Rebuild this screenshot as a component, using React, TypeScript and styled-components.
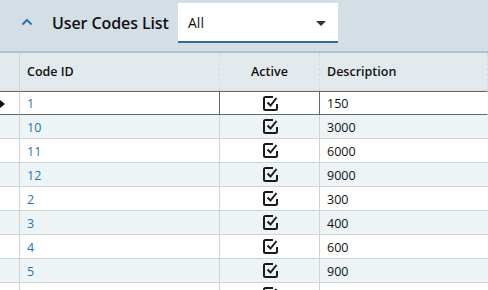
import React from 'react'
import styled, { createGlobalStyle } from 'styled-components'

const GlobalStyle = createGlobalStyle`
  html, body {
    margin: 0;
    padding: 0;
    background: #fff;
    overflow: hidden;
  }
  body {
    font-family: 'Open Sans', 'Noto Sans', sans-serif;
  }
`

const Page = styled.div`
  width: 488px;
  height: 290px;
  overflow: hidden;
  background: #fff;
`

const TitleBar = styled.div`
  display: flex;
  align-items: flex-start;
  height: 53px;
  padding-top: 3px;
  box-sizing: border-box;
  background: #d3dfe4;
  border-bottom: 2px solid #aac3cf;
`

const Collapse = styled.button`
  width: 52px;
  height: 40px;
  padding: 0 0 2px 2px;
  border: 0;
  background: none;
  display: flex;
  align-items: center;
  justify-content: center;
`

const Title = styled.h2`
  margin: 0;
  height: 40px;
  line-height: 40px;
  font-size: 16px;
  font-weight: 600;
  color: #111;
  letter-spacing: -0.1px;
  width: 126px;
`

const Select = styled.div`
  width: 160px;
  height: 40px;
  box-sizing: border-box;
  background: #fff;
  border-bottom: 2px solid #2b6f98;
  display: flex;
  align-items: center;
  justify-content: space-between;
  padding: 0 12px 0 10px;
  font-size: 14px;
  color: #111;
`

const Caret = styled.span`
  width: 0;
  height: 0;
  border-left: 5px solid transparent;
  border-right: 5px solid transparent;
  border-top: 5px solid #333;
  margin-top: 2px;
`

const Grid = styled.div`
  display: grid;
  grid-template-columns: 20px 200px 100px 1fr;
`

const Head = styled.div<{ $center?: boolean; $first?: boolean }>`
  height: 38px;
  box-sizing: border-box;
  background: #e3eaed;
  border-right: ${(p) => (p.$first ? '1px solid #ccd3d6' : '1px dashed #d3d9dc')};
  border-bottom: 1px solid #d9dfe2;
  display: flex;
  align-items: center;
  justify-content: ${(p) => (p.$center ? 'center' : 'flex-start')};
  padding-left: ${(p) => (p.$center || p.$first ? '0' : '7px')};
  font-size: 12.5px;
  font-weight: 600;
  color: #111;
`

const Cell = styled.div<{ $alt?: boolean; $center?: boolean; $link?: boolean; $sel?: boolean; $last?: boolean }>`
  height: 24px;
  box-sizing: border-box;
  background: ${(p) => (p.$alt ? '#edf4f6' : '#fff')};
  border-right: 1px solid ${(p) => (p.$last ? 'transparent' : '#cfd3d5')};
  border-bottom: 1px solid ${(p) => (p.$sel ? '#666' : '#cfd3d5')};
  border-top: ${(p) => (p.$sel ? '1px solid #666' : '0')};
  display: flex;
  align-items: center;
  justify-content: ${(p) => (p.$center ? 'center' : 'flex-start')};
  padding-left: ${(p) => (p.$center ? '0' : '7px')};
  padding-top: ${(p) => (p.$center ? '0' : '1px')};
  font-size: 12.5px;
  color: ${(p) => (p.$link ? '#2677ae' : '#111')};
`

const Marker = styled(Cell)`
  padding-left: 0;
`

const SelCell = styled(Cell)`
  border-right-color: #666;
`

const Chevron = () => (
  <svg width="12" height="8" viewBox="0 0 12 8">
    <path d="M1.5 6.5 L6 2 L10.5 6.5" fill="none" stroke="#2677ae" strokeWidth="2" />
  </svg>
)

const CheckIcon = () => (
  <svg width="17" height="17" viewBox="0 0 17 17" style={{ marginLeft: 1 }}>
    <path
      d="M11 2 H3.5 Q2 2 2 3.5 V13.5 Q2 15 3.5 15 H13.5 Q15 15 15 13.5 V9"
      fill="none"
      stroke="#1a1a1a"
      strokeWidth="2"
    />
    <path d="M5.5 7.5 L8.5 10.5 L14.5 3" fill="none" stroke="#1a1a1a" strokeWidth="2" />
  </svg>
)

const rows = [
  { id: '1', desc: '150' },
  { id: '10', desc: '3000' },
  { id: '11', desc: '6000' },
  { id: '12', desc: '9000' },
  { id: '2', desc: '300' },
  { id: '3', desc: '400' },
  { id: '4', desc: '600' },
  { id: '5', desc: '900' },
  { id: '', desc: '' },
]

const App: React.FC = () => {
  return (
    <Page>
      <GlobalStyle />
      <TitleBar>
        <Collapse>
          <Chevron />
        </Collapse>
        <Title>User Codes List</Title>
        <Select>
          All
          <Caret />
        </Select>
      </TitleBar>
      <Grid>
        <Head $first />
        <Head>Code ID</Head>
        <Head $center>Active</Head>
        <Head>Description</Head>
        {rows.map((r, i) => {
          const alt = i % 2 === 1
          const sel = i === 0
          const C = sel ? SelCell : Cell
          return (
            <React.Fragment key={i}>
              <Marker $alt={alt} $sel={sel}>
                {sel && (
                  <svg width="6" height="10" viewBox="0 0 6 10">
                    <path d="M0 1 L5 5 L0 9 Z" fill="#111" />
                  </svg>
                )}
              </Marker>
              <C $alt={alt} $sel={sel} $link>
                {r.id}
              </C>
              <C $alt={alt} $sel={sel} $center>
                <CheckIcon />
              </C>
              <Cell $alt={alt} $sel={sel} $last>
                {r.desc}
              </Cell>
            </React.Fragment>
          )
        })}
      </Grid>
    </Page>
  )
}

export default App
